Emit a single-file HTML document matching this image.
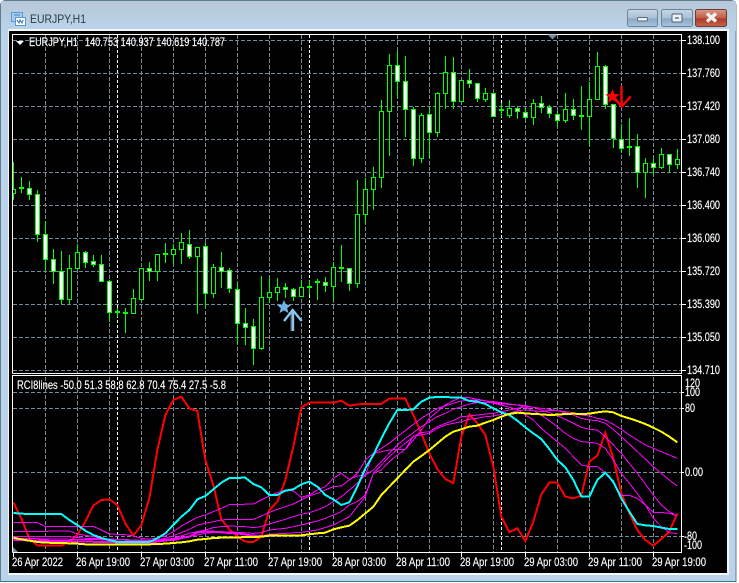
<!DOCTYPE html>
<html><head><meta charset="utf-8"><style>
html,body{margin:0;padding:0;background:#fff;width:739px;height:583px;overflow:hidden}
svg{display:block}
text{font-family:"Liberation Sans",sans-serif;font-size:12px;fill:#fff;stroke:#fff;stroke-width:.15}
.a{shape-rendering:crispEdges}
</style></head><body>
<svg width="739" height="583" viewBox="0 0 739 583" xmlns="http://www.w3.org/2000/svg">
<defs>
<linearGradient id="tb" x1="0" y1="0" x2="0" y2="1"><stop offset="0" stop-color="#b7c8d8"/><stop offset="1" stop-color="#bad3ea"/></linearGradient>
<linearGradient id="bb" x1="0" y1="0" x2="0" y2="1"><stop offset="0" stop-color="#c6d6e6"/><stop offset=".5" stop-color="#a9c0d6"/><stop offset=".55" stop-color="#8ba8c4"/><stop offset="1" stop-color="#a8c4de"/></linearGradient>
<linearGradient id="cb" x1="0" y1="0" x2="0" y2="1"><stop offset="0" stop-color="#d89a8a"/><stop offset=".5" stop-color="#c25a48"/><stop offset=".55" stop-color="#ab3a28"/><stop offset="1" stop-color="#c2654c"/></linearGradient>
<clipPath id="c1"><rect x="13" y="35" width="668" height="338"/></clipPath>
<clipPath id="c2"><rect x="13" y="377" width="668" height="175"/></clipPath>
</defs>

<!-- window frame -->
<path d="M5 .5H731Q735 .5 736 5V581.5H.5V5Q1 1 5 .5Z" fill="#bad3ea" stroke="#5f7b8c"/>
<rect x="1" y="1" width="735" height="30" fill="url(#tb)"/>
<rect x="1" y="31" width="7" height="550" fill="#bad3ea"/>
<rect x="8" y="29" width="721" height="546" fill="#f4f7fa"/>
<rect x="9" y="31" width="718" height="542" fill="#000"/>
<rect x="1" y="581" width="735" height="1" fill="#2f7f86"/>

<!-- title -->
<g class="a">
<rect x="11.5" y="12.5" width="11" height="9" fill="#a8ccee" stroke="#5c96d0"/>
<rect x="15.5" y="17.5" width="10" height="8" fill="#fff" stroke="#5c96d0"/>
<path d="M14 15h6M17 20l2 3 1-3 2 3 1-3" stroke="#4080c0" fill="none"/>
</g>
<text x="30" y="23" textLength="56" lengthAdjust="spacingAndGlyphs" style="font-size:12px;fill:#2b3a44;stroke:none">EURJPY,H1</text>

<!-- buttons -->
<rect x="627.5" y="9.5" width="30" height="17" rx="2" fill="url(#bb)" stroke="#6d8499"/>
<rect x="661.5" y="9.5" width="31" height="17" rx="2" fill="url(#bb)" stroke="#6d8499"/>
<rect x="695.5" y="9.5" width="31" height="17" rx="2" fill="url(#cb)" stroke="#6f3a30"/>
<rect x="637.5" y="17.5" width="10" height="3.5" rx="1" fill="#eef2f6" stroke="#5a6a7a"/>
<rect x="672" y="14" width="10" height="8" fill="#eef2f6" stroke="#4f5f6f" rx="1"/>
<rect x="675" y="17" width="4" height="2" fill="#7e93a8"/>
<path d="M707 13.5l9 8M716 13.5l-9 8" stroke="#f4f4f4" stroke-width="3.4"/>

<!-- grid main -->
<g class="a" clip-path="url(#c1)">
<path d="M13 40.5H681M13 73.5H681M13 106.5H681M13 139.5H681M13 172.5H681M13 205.5H681M13 238.5H681M13 271.5H681M13 304.5H681M13 337.5H681M13 370.5H681" stroke="#778899" stroke-dasharray="4 2" fill="none"/>
<path d="M45.5 35V373M77.5 35V373M109.5 35V373M141.5 35V373M173.5 35V373M205.5 35V373M237.5 35V373M269.5 35V373M301.5 35V373M333.5 35V373M365.5 35V373M397.5 35V373M429.5 35V373M461.5 35V373M493.5 35V373M525.5 35V373M557.5 35V373M589.5 35V373M621.5 35V373M653.5 35V373" stroke="#778899" stroke-dasharray="4 2" fill="none"/>
<path d="M117.5 35V373M309.5 35V373M501.5 35V373" stroke="#fff" stroke-dasharray="3 2" fill="none"/>

<!-- wicks -->
<path fill="none" stroke="#00ff00" d="M13.5 162V200M21.5 177V193M29.5 181V200M37.5 190V242M45.5 221V270M53.5 249V284M61.5 251V304M69.5 255V304M77.5 244V268M85.5 251V268M93.5 255V267M101.5 255V282M109.5 280V322M117.5 308V317M125.5 308V333M133.5 289V313M141.5 268V301M149.5 262V281M157.5 254V281M165.5 243V263M173.5 244V264M181.5 233V264M189.5 230V259M197.5 247V314M205.5 243V307M213.5 264V298M221.5 252V288M229.5 268V293M237.5 283V344M245.5 308V345M253.5 319V365M261.5 276V350M269.5 278V303M277.5 278V301M285.5 283V298M293.5 288V301M301.5 280V296M309.5 280V295M317.5 279V300M325.5 277V292M333.5 262V301M341.5 245V282M349.5 268V291M357.5 180V288M365.5 178V223M373.5 167V210M381.5 100V188M389.5 54V156M397.5 51V98M405.5 56V137M413.5 107V166M421.5 113V163M429.5 107V159M437.5 92V137M445.5 56V109M453.5 57V109M461.5 80V101M469.5 69V88M477.5 83V102M485.5 88V102M493.5 93V116M501.5 103V117M509.5 100V118M517.5 107V119M525.5 108V119M533.5 99V125M541.5 96V113M549.5 105V118M557.5 111V127M565.5 93V123M573.5 99V120M581.5 86V130M589.5 82V146M597.5 52V99M605.5 65V109M613.5 104V148M621.5 124V153M629.5 118V156M637.5 134V188M645.5 158V198M653.5 158V175M661.5 148V169M669.5 154V172M677.5 149V169"/>
<!-- bull bodies -->
<path fill="#000" stroke="#00ff00" d="M11.5 189.5h4V193.5h-4zM67.5 268.5h4V299.5h-4zM75.5 252.5h4V268.5h-4zM131.5 298.5h4V313.5h-4zM139.5 268.5h4V299.5h-4zM155.5 254.5h4V271.5h-4zM171.5 249.5h4V254.5h-4zM179.5 242.5h4V249.5h-4zM195.5 247.5h4V256.5h-4zM211.5 267.5h4V293.5h-4zM259.5 297.5h4V348.5h-4zM267.5 292.5h4V297.5h-4zM275.5 287.5h4V292.5h-4zM299.5 287.5h4V296.5h-4zM331.5 267.5h4V286.5h-4zM355.5 214.5h4V283.5h-4zM363.5 189.5h4V214.5h-4zM371.5 177.5h4V189.5h-4zM379.5 111.5h4V177.5h-4zM387.5 65.5h4V111.5h-4zM419.5 115.5h4V158.5h-4zM435.5 93.5h4V132.5h-4zM443.5 72.5h4V93.5h-4zM459.5 80.5h4V101.5h-4zM483.5 93.5h4V99.5h-4zM507.5 108.5h4V115.5h-4zM531.5 103.5h4V117.5h-4zM563.5 109.5h4V120.5h-4zM587.5 99.5h4V116.5h-4zM595.5 66.5h4V99.5h-4zM643.5 163.5h4V172.5h-4zM659.5 154.5h4V167.5h-4zM675.5 159.5h4V164.5h-4z"/>
<!-- bear bodies -->
<path fill="#fff" stroke="#00ff00" d="M27.5 188.5h4V194.5h-4zM35.5 194.5h4V234.5h-4zM43.5 234.5h4V259.5h-4zM51.5 259.5h4V271.5h-4zM59.5 271.5h4V299.5h-4zM83.5 252.5h4V262.5h-4zM91.5 261.5h4V264.5h-4zM99.5 264.5h4V281.5h-4zM107.5 281.5h4V312.5h-4zM147.5 268.5h4V271.5h-4zM187.5 244.5h4V256.5h-4zM203.5 246.5h4V293.5h-4zM219.5 267.5h4V271.5h-4zM227.5 270.5h4V288.5h-4zM235.5 289.5h4V323.5h-4zM243.5 323.5h4V327.5h-4zM251.5 326.5h4V348.5h-4zM283.5 287.5h4V289.5h-4zM291.5 289.5h4V296.5h-4zM323.5 282.5h4V285.5h-4zM347.5 268.5h4V283.5h-4zM395.5 65.5h4V81.5h-4zM403.5 81.5h4V109.5h-4zM411.5 109.5h4V158.5h-4zM427.5 114.5h4V132.5h-4zM451.5 72.5h4V101.5h-4zM467.5 80.5h4V83.5h-4zM475.5 83.5h4V98.5h-4zM491.5 93.5h4V116.5h-4zM515.5 108.5h4V111.5h-4zM523.5 112.5h4V117.5h-4zM539.5 103.5h4V107.5h-4zM547.5 107.5h4V113.5h-4zM555.5 114.5h4V120.5h-4zM571.5 109.5h4V115.5h-4zM603.5 66.5h4V104.5h-4zM611.5 104.5h4V138.5h-4zM619.5 139.5h4V148.5h-4zM635.5 146.5h4V172.5h-4zM651.5 163.5h4V167.5h-4zM667.5 154.5h4V164.5h-4z"/>
<!-- flat -->
<path fill="#00ff00" d="M19 187h5v2h-5zM115 311h5v2h-5zM123 312h5v2h-5zM163 253h5v2h-5zM307 286h5v2h-5zM315 281h5v2h-5zM339 267h5v2h-5zM499 109h5v2h-5zM579 115h5v2h-5zM627 146h5v2h-5z"/>
</g>

<!-- objects -->
<path d="M284 300l2 4.6 5 .4-3.8 3.2 1.3 4.9-4.5-2.7-4.5 2.7 1.3-4.9-3.8-3.2 5-.4z" fill="#6fb2e6"/>
<path d="M292 331V311" stroke="#5a6f80" stroke-width="3" fill="none"/>
<path d="M293 331V311M284 321l8.7-11 9 11" stroke="#8cc4ec" stroke-width="2.4" fill="none"/>
<path d="M612.5 89l1.9 5 5.3.3-4.1 3.3 1.4 5.2-4.5-2.9-4.5 2.9 1.4-5.2-4.1-3.3 5.3-.3z" fill="#ff0000"/>
<path d="M621.5 86V106M613 96.5l8.7 10 9-10" stroke="#ff0000" stroke-width="2.4" fill="none"/>

<!-- sub grid -->
<g class="a" clip-path="url(#c2)">
<path d="M13 392.5H681M13 408.5H681M13 472.5H681M13 536.5H681" stroke="#778899" stroke-dasharray="4 2" fill="none"/>
<path d="M45.5 377V552M77.5 377V552M109.5 377V552M141.5 377V552M173.5 377V552M205.5 377V552M237.5 377V552M269.5 377V552M301.5 377V552M333.5 377V552M365.5 377V552M397.5 377V552M429.5 377V552M461.5 377V552M493.5 377V552M525.5 377V552M557.5 377V552M589.5 377V552M621.5 377V552M653.5 377V552" stroke="#778899" stroke-dasharray="4 2" fill="none"/>
<path d="M117.5 377V552M309.5 377V552M501.5 377V552" stroke="#fff" stroke-dasharray="3 2" fill="none"/>
</g>

<!-- RCI lines -->
<g clip-path="url(#c2)" class="a">
<g transform="translate(0,390) scale(.33333)" fill="none">
<polyline stroke="#ff0000" stroke-width="6" points="40,337 64,385 88,445 112,466 136,467 160,467 184,467 208,455 232,435 256,395 280,347 304,330 328,328 352,345 376,400 400,437 424,405 448,325 472,180 496,75 520,30 544,20 568,55 592,63 616,210 640,285 664,388 688,418 712,440 736,455 760,456 784,440 808,360 832,335 856,270 880,170 904,52 928,38 952,38 976,38 1000,38 1024,32 1048,47 1072,43 1096,42"/>
<polyline stroke="#ff00ff" stroke-width="3" points="40,397 112,397 136,410 232,410 280,409 304,420 328,432 376,434 400,438 424,445 448,448 472,443 496,438 520,425 544,408 568,395 592,382 616,375 640,365 664,355 688,344 760,342 784,330 808,318 832,308 856,300 880,303 904,322 928,315 952,300 976,290 1000,265 1024,250 1048,268 1072,258 1096,255"/>
<polyline stroke="#ff00ff" stroke-width="3" points="40,425 208,423 232,432 256,436 280,440 304,445 328,448 448,455 472,450 496,445 520,437 544,428 568,418 592,405 616,400 640,395 664,390 688,388 760,388 784,378 808,367 832,358 856,350 880,342 904,330 928,318 952,310 976,300 1000,290 1024,288 1048,270 1072,250 1096,210"/>
<polyline stroke="#ff00ff" stroke-width="3" points="40,440 208,440 256,445 472,452 520,445 568,430 616,420 640,413 664,410 688,408 736,410 760,413 784,410 808,402 832,395 856,388 880,380 904,373 928,368 952,360 976,350 1000,335 1024,320 1048,300 1072,280 1096,255"/>
<polyline stroke="#ff00ff" stroke-width="3" points="40,445 280,449 520,452 568,440 616,430 664,425 712,427 760,430 784,428 808,420 856,415 904,405 952,393 976,385 1000,375 1024,365 1048,345 1072,335 1096,315"/>
<polyline stroke="#ff00ff" stroke-width="6" points="40,450 136,452 400,458 448,458 472,455 520,448 568,440 592,427 616,425 640,425 664,427 688,429 712,430 736,434 760,437 784,438"/>
<polyline stroke="#ff00ff" stroke-width="3" points="784,438 808,433 856,430 904,427 952,420 1000,405 1048,380 1072,350 1096,320"/>
<polyline stroke="#00ffff" stroke-width="6" points="40,369 64,371 88,372 184,372 208,390 232,405 256,422 280,435 304,444 328,450 352,456 448,456 472,445 496,430 520,405 544,380 568,360 592,328 616,318 640,298 664,278 688,264 736,263 760,282 784,292 808,315 832,315 856,302 880,298 904,283 928,275 952,290 976,315 1000,328 1024,345 1048,337 1072,290 1096,235"/>
<polyline stroke="#ffff00" stroke-width="6" points="40,443 64,448 88,452 112,456 136,458 184,459 232,461 256,463 424,464 448,463 472,462 496,461 520,459 544,457 568,454 592,449 616,447 640,444 664,443 712,442 760,441 784,440 808,437 856,436 904,436 928,433 952,430 976,428 1000,418 1024,412 1048,407 1072,390 1096,370"/>
</g>
<g transform="translate(370,390) scale(.33333)" fill="none">
<polyline stroke="#ff0000" stroke-width="6" points="-14,42 10,42 34,42 58,26 106,26 130,75 154,130 178,190 202,237 226,267 250,279 274,140 298,73 322,100 346,135 370,230 394,380 418,427 442,415 466,453 490,395 514,313 538,278 562,278 586,320 610,325 634,317 658,215 682,197 706,128 730,205 754,310 778,370 802,420 826,450 850,467 874,447 898,425 922,370"/>
<polyline stroke="#ff00ff" stroke-width="3" points="-14,255 10,190 34,185 58,180 82,178 106,178 130,150 154,120 178,85 202,65 226,45 250,32 274,22 298,23 322,28 346,32 370,40 394,45 418,52 442,58 466,75 490,90 514,115 538,135 562,155 586,175 610,200 634,225 658,230 682,230 706,248 730,280 754,316 778,316 802,325 826,345 850,367 874,367 898,370 922,378"/>
<polyline stroke="#ff00ff" stroke-width="3" points="-14,210 10,190 34,175 58,160 82,140 106,122 130,103 154,85 178,70 202,55 226,48 250,40 274,33 298,30 322,30 346,33 370,35 394,38 418,42 442,45 466,52 490,62 514,75 538,92 562,110 586,130 610,145 634,155 658,157 682,160 706,175 730,210 754,250 778,280 802,310 826,345 850,385 874,410 898,428 922,431"/>
<polyline stroke="#ff00ff" stroke-width="3" points="-14,255 10,240 34,215 58,190 82,165 106,145 130,128 154,110 178,95 202,80 226,70 250,58 274,50 298,42 322,38 370,38 394,42 418,43 442,45 466,47 490,52 514,60 538,68 562,77 586,88 610,100 634,112 658,118 682,120 706,140 730,165 754,190 778,220 802,250 826,282 850,315 874,345 898,365 922,378"/>
<polyline stroke="#ff00ff" stroke-width="3" points="-14,315 10,250 34,225 58,200 82,178 106,160 130,140 154,128 178,125 202,110 226,100 250,92 274,80 298,78 322,75 346,72 370,70 394,65 418,60 442,55 466,50 490,52 514,55 538,58 562,62 586,68 610,75 634,85 658,90 682,92 706,100 730,118 754,140 778,162 802,185 826,207 850,230 874,250 898,270 922,288"/>
<polyline stroke="#ff00ff" stroke-width="3" points="-14,320 10,250 34,240 58,215 82,195 106,178 130,138 154,135 178,130 202,115 226,105 250,100 274,95 298,88 322,85 346,80 370,78 394,73 418,70 442,62 466,60 490,62 514,65 538,62 562,62 586,65 610,68 634,75 658,78 682,85 706,90 730,103 754,118 778,135 802,150 826,165 850,175 874,185 898,195 922,205"/>
<polyline stroke="#00ffff" stroke-width="6" points="-14,235 10,195 34,145 58,100 82,60 106,60 130,58 154,35 178,23 202,21 250,22 274,23 298,33 322,35 346,42 370,55 394,67 418,75 442,92 466,112 490,130 514,147 538,177 562,210 586,232 610,270 634,320 658,320 682,270 706,248 730,275 754,325 778,365 802,402 826,406 850,408 874,413 898,417 922,417"/>
<polyline stroke="#ffff00" stroke-width="6" points="-14,370 10,350 34,315 58,290 82,265 106,240 130,215 154,198 178,180 202,160 226,140 250,125 274,118 298,110 322,107 346,98 370,90 394,80 418,72 442,68 466,70 490,72 514,73 538,75 562,74 586,72 610,71 634,72 658,71 682,67 706,64 730,67 754,78 778,85 802,93 826,102 850,113 874,125 898,140 922,157"/>
</g>
</g>
<path d="M13 547l5 5h-5z" fill="#778899"/>

<!-- frames -->
<g class="a" fill="none" stroke="#fff">
<path d="M12.5 373.5V34.5H681.5V373.5H12.5"/>
<path d="M12.5 552.5V375.5H681.5V552.5H12.5"/>
<path d="M681 40.5h5M681 73.5h5M681 106.5h5M681 139.5h5M681 172.5h5M681 205.5h5M681 238.5h5M681 271.5h5M681 304.5h5M681 337.5h5M681 370.5h5M681 392.5h3M681 408.5h3M681 472.5h3M681 536.5h3"/>
<path d="M13.5 552v5M77.5 552v5M141.5 552v5M205.5 552v5M269.5 552v5M333.5 552v5M397.5 552v5M461.5 552v5M525.5 552v5M589.5 552v5M653.5 552v5"/>
</g>
<path d="M547.5 34.5h10l-5 5z" fill="#778899"/>

<!-- legends -->
<path d="M16 41h8l-4 4z" fill="#fff"/>
<text x="29" y="46" textLength="49" lengthAdjust="spacingAndGlyphs">EURJPY,H1</text>
<text x="85" y="46" textLength="140" lengthAdjust="spacingAndGlyphs">140.753 140.937 140.619 140.787</text>
<text x="17" y="389" textLength="209" lengthAdjust="spacingAndGlyphs">RCI8lines -50.0 51.3 58.8 62.8 70.4 75.4 27.5 -5.8</text>

<!-- price labels -->
<g>
<text x="687" y="44" textLength="33" lengthAdjust="spacingAndGlyphs">138.100</text>
<text x="687" y="77" textLength="33" lengthAdjust="spacingAndGlyphs">137.760</text>
<text x="687" y="110" textLength="33" lengthAdjust="spacingAndGlyphs">137.420</text>
<text x="687" y="143" textLength="33" lengthAdjust="spacingAndGlyphs">137.080</text>
<text x="687" y="176" textLength="33" lengthAdjust="spacingAndGlyphs">136.740</text>
<text x="687" y="209" textLength="33" lengthAdjust="spacingAndGlyphs">136.400</text>
<text x="687" y="242" textLength="33" lengthAdjust="spacingAndGlyphs">136.060</text>
<text x="687" y="275" textLength="33" lengthAdjust="spacingAndGlyphs">135.720</text>
<text x="687" y="308" textLength="33" lengthAdjust="spacingAndGlyphs">135.390</text>
<text x="687" y="341" textLength="33" lengthAdjust="spacingAndGlyphs">135.050</text>
<text x="687" y="374" textLength="33" lengthAdjust="spacingAndGlyphs">134.710</text>
<text x="685" y="387" textLength="15" lengthAdjust="spacingAndGlyphs">120</text>
<text x="685" y="396" textLength="15" lengthAdjust="spacingAndGlyphs">100</text>
<text x="685" y="412" textLength="10" lengthAdjust="spacingAndGlyphs">80</text>
<text x="685" y="476" textLength="18" lengthAdjust="spacingAndGlyphs">0.00</text>
<text x="684" y="540" textLength="13" lengthAdjust="spacingAndGlyphs">-80</text>
<text x="684" y="549" textLength="18" lengthAdjust="spacingAndGlyphs">-100</text>
</g>

<!-- time labels -->
<g>
<text x="12" y="566" textLength="51" lengthAdjust="spacingAndGlyphs">26 Apr 2022</text>
<text x="76" y="566" textLength="54" lengthAdjust="spacingAndGlyphs">26 Apr 19:00</text>
<text x="140" y="566" textLength="54" lengthAdjust="spacingAndGlyphs">27 Apr 03:00</text>
<text x="204" y="566" textLength="54" lengthAdjust="spacingAndGlyphs">27 Apr 11:00</text>
<text x="268" y="566" textLength="54" lengthAdjust="spacingAndGlyphs">27 Apr 19:00</text>
<text x="332" y="566" textLength="54" lengthAdjust="spacingAndGlyphs">28 Apr 03:00</text>
<text x="396" y="566" textLength="54" lengthAdjust="spacingAndGlyphs">28 Apr 11:00</text>
<text x="460" y="566" textLength="54" lengthAdjust="spacingAndGlyphs">28 Apr 19:00</text>
<text x="524" y="566" textLength="54" lengthAdjust="spacingAndGlyphs">29 Apr 03:00</text>
<text x="588" y="566" textLength="54" lengthAdjust="spacingAndGlyphs">29 Apr 11:00</text>
<text x="652" y="566" textLength="54" lengthAdjust="spacingAndGlyphs">29 Apr 19:00</text>
</g>
</svg>
</body></html>
